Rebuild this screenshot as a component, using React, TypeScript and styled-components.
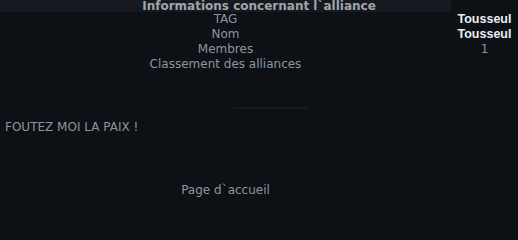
import styled, { createGlobalStyle } from 'styled-components';

const GlobalStyle = createGlobalStyle`
  html, body {
    margin: 0;
    padding: 0;
    background: #0d1015;
  }
  body {
    font-family: "DejaVu Sans", Verdana, sans-serif;
    font-size: 12px;
    color: #8a96a2;
  }
`;

const rows = [
  { label: 'TAG', value: 'Tousseul', strong: true },
  { label: 'Nom', value: 'Tousseul', strong: true },
  { label: 'Membres', value: '1', strong: false },
  { label: 'Classement des alliances', value: '', strong: false },
];

const App = () => {
  return (
    <>
      <GlobalStyle />
      <Page>
        <InfoHeader>Informations concernant l`alliance</InfoHeader>
        <InfoTable>
          {rows.map(row => (
            <InfoRow key={row.label}>
              <Label>{row.label}</Label>
              <Value strong={row.strong}>{row.value}</Value>
            </InfoRow>
          ))}
        </InfoTable>
        <EmptyBox />
        <Message>FOUTEZ MOI LA PAIX !</Message>
        <Footer>
          <FooterLink>Page d`accueil</FooterLink>
        </Footer>
      </Page>
    </>
  );
};

export default App;

const Page = styled.div`
  width: 518px;
  height: 200px;
  overflow: hidden;
`;

const InfoHeader = styled.div`
  height: 12px;
  line-height: 12px;
  text-align: center;
  font-weight: bold;
  color: #a0a5ab;
  background: linear-gradient(to right, #161a20 451px, transparent 451px);
  white-space: nowrap;
`;

const InfoTable = styled.div`
  display: grid;
  grid-template-columns: 451px 1fr;
`;

const InfoRow = styled.div`
  display: contents;
`;

const Label = styled.div`
  line-height: 15px;
  text-align: center;
`;

const Value = styled.div<{ strong: boolean }>`
  line-height: 15px;
  text-align: center;
  font-family: ${({ strong }) => (strong ? '"Liberation Sans", Arial, sans-serif' : 'inherit')};
  font-size: ${({ strong }) => (strong ? '12.5px' : '12px')};
  font-weight: ${({ strong }) => (strong ? 'bold' : 'normal')};
  color: ${({ strong }) => (strong ? '#e9eef2' : '#8a96a2')};
`;

const EmptyBox = styled.div`
  width: 73px;
  height: 2px;
  margin: 35px 0 0 233px;
  border: 1px solid #171b21;
  border-top-width: 2px;
  border-bottom: none;
`;

const Message = styled.div`
  margin-top: 9px;
  padding-left: 5px;
  line-height: 15px;
`;

const Footer = styled.div`
  width: 451px;
  margin-top: 48px;
  text-align: center;
  line-height: 15px;
`;

const FooterLink = styled.span`
  color: #8a96a2;
  cursor: pointer;
`;
